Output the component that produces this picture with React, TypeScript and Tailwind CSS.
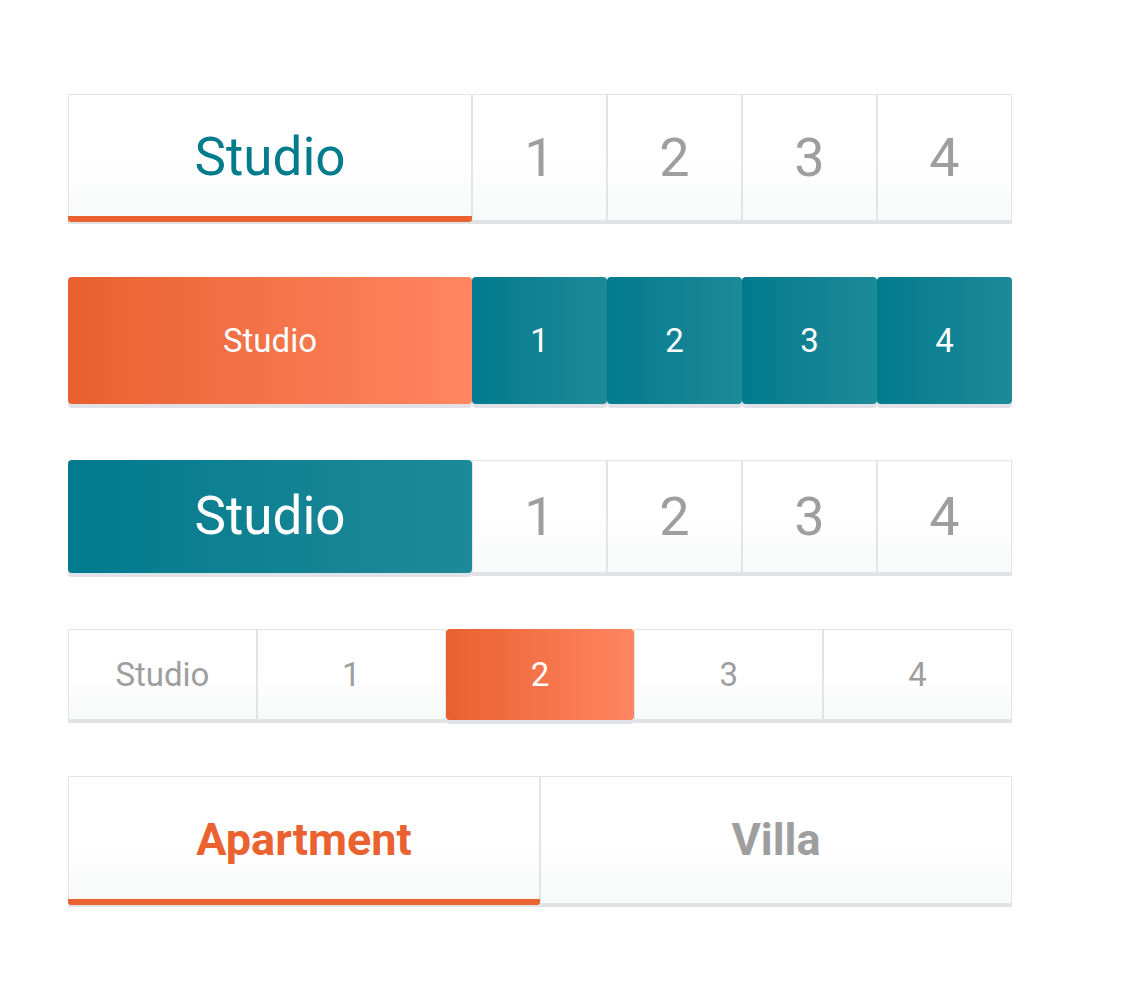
import React from "react";

const font = { fontFamily: "Roboto, 'Noto Sans', sans-serif" };

const plain =
  "flex items-center justify-center border border-[#e3e4e4] bg-gradient-to-b from-white from-50% to-[#f8f9f9] shadow-[0_3px_0_#e1e2e7]";
const orange =
  "flex items-center justify-center rounded-[4px] bg-gradient-to-r from-[#e9602f] to-[#ff8660] text-white shadow-[0_4px_0_#e1e2e7]";
const teal =
  "flex items-center justify-center rounded-[4px] bg-gradient-to-r from-[#017a8e] to-[#1c8a99] text-white shadow-[0_4px_0_#e1e2e7]";

export default function App() {
  const nums = ["1", "2", "3", "4"];
  return (
    <div className="min-h-[1004px] w-[1148px] bg-white pl-[68px] pt-[94px]" style={font}>
      <div className="flex w-[944px] flex-col gap-[56px]">
        {/* Row 1 */}
        <div className="flex h-[127px]">
          <div className={`${plain} relative w-[404px] shrink-0 text-[53px] text-[#027b8c]`}>
            Studio
            <div className="absolute -bottom-[2px] -left-px -right-px h-[6px] rounded-b-[3px] bg-[#ea6230]" />
          </div>
          {nums.map((n) => (
            <div key={n} className={`${plain} w-[135px] shrink-0 text-[54px] text-[#9e9e9e]`}>
              {n}
            </div>
          ))}
        </div>

        {/* Row 2 */}
        <div className="flex h-[127px]">
          <div className={`${orange} w-[404px] shrink-0 text-[33px]`}>Studio</div>
          {nums.map((n) => (
            <div key={n} className={`${teal} w-[135px] shrink-0 text-[33px]`}>
              {n}
            </div>
          ))}
        </div>

        {/* Row 3 */}
        <div className="flex h-[113px]">
          <div className={`${teal} w-[404px] shrink-0 text-[53px]`}>Studio</div>
          {nums.map((n) => (
            <div key={n} className={`${plain} w-[135px] shrink-0 text-[54px] text-[#9e9e9e]`}>
              {n}
            </div>
          ))}
        </div>

        {/* Row 4 */}
        <div className="grid h-[91px] grid-cols-5">
          {["Studio", "1", "2", "3", "4"].map((n) =>
            n === "2" ? (
              <div key={n} className={`${orange} text-[33px]`}>
                {n}
              </div>
            ) : (
              <div key={n} className={`${plain} text-[33px] text-[#9e9e9e]`}>
                {n}
              </div>
            )
          )}
        </div>

        {/* Row 5 */}
        <div className="grid h-[128px] grid-cols-2">
          <div className={`${plain} relative text-[45px] font-bold text-[#ea6230]`}>
            Apartment
            <div className="absolute -bottom-[2px] -left-px -right-px h-[6px] rounded-b-[3px] bg-[#ea6230]" />
          </div>
          <div className={`${plain} text-[45px] font-bold text-[#9e9e9e]`}>Villa</div>
        </div>
      </div>
    </div>
  );
}
